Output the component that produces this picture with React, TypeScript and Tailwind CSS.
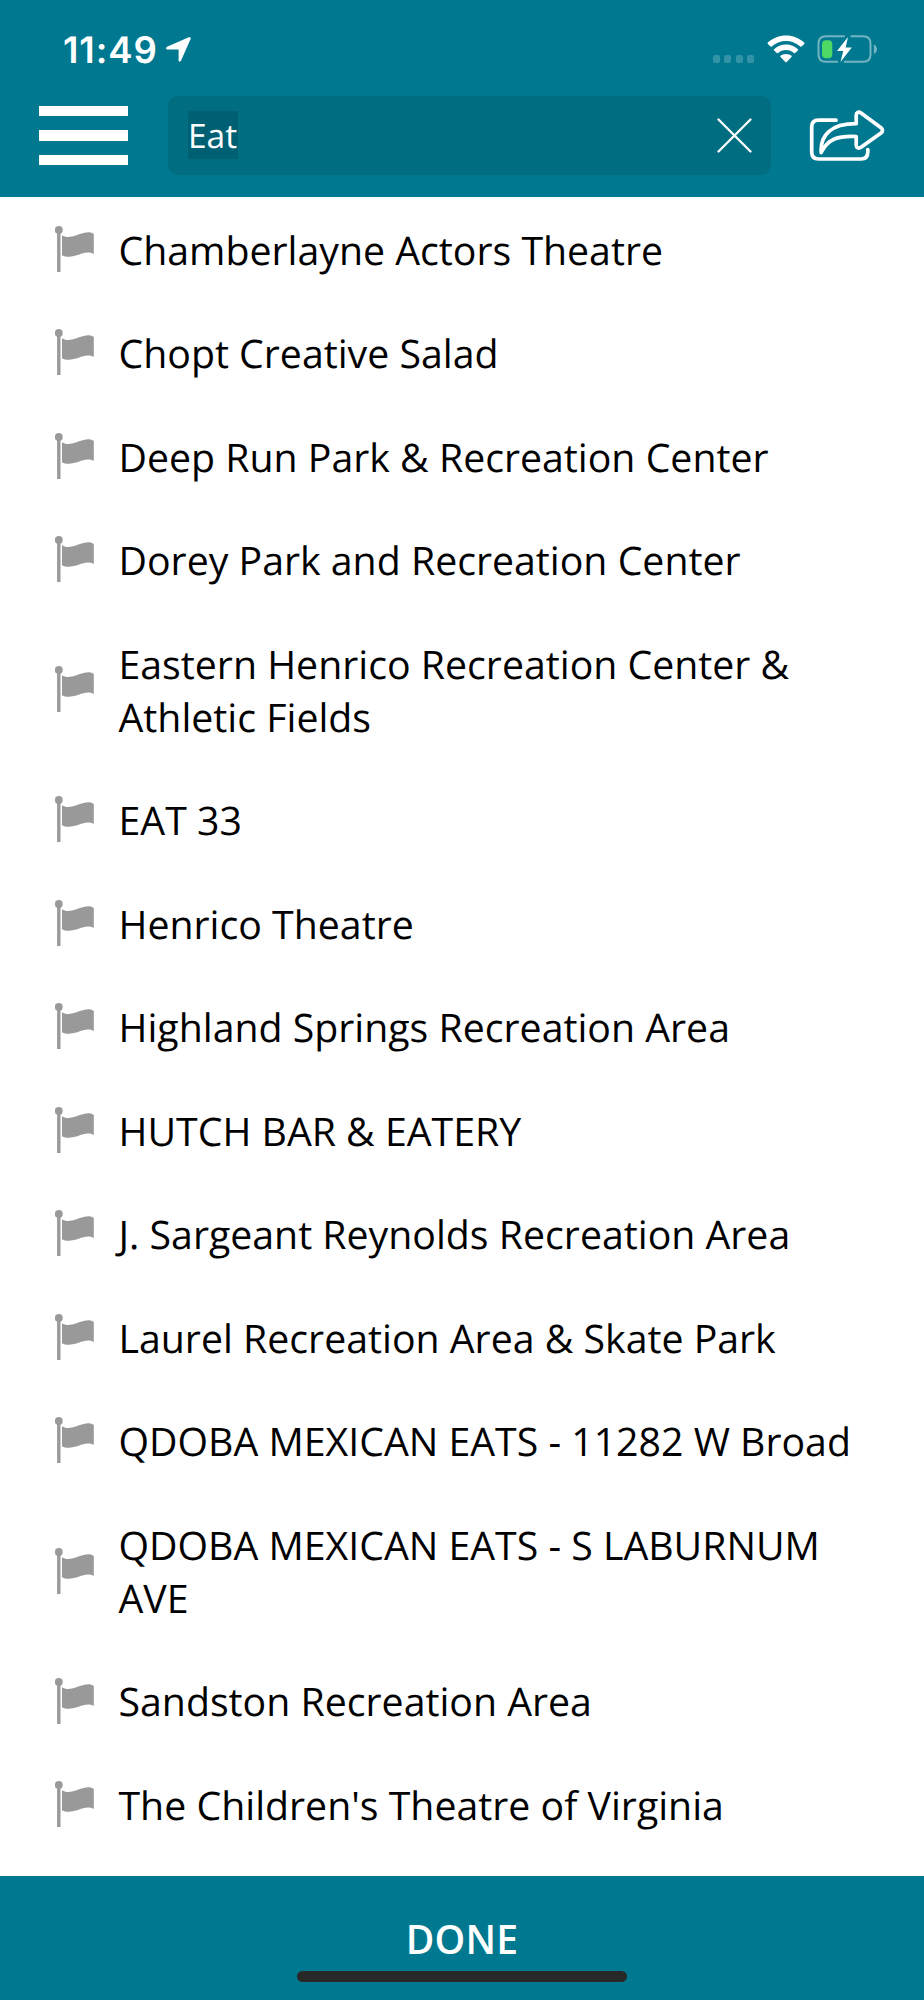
import React, { useState } from "react";

const PLACES = [
  "Chamberlayne Actors Theatre",
  "Chopt Creative Salad",
  "Deep Run Park & Recreation Center",
  "Dorey Park and Recreation Center",
  "Eastern Henrico Recreation Center & Athletic Fields",
  "EAT 33",
  "Henrico Theatre",
  "Highland Springs Recreation Area",
  "HUTCH BAR & EATERY",
  "J. Sargeant Reynolds Recreation Area",
  "Laurel Recreation Area & Skate Park",
  "QDOBA MEXICAN EATS - 11282 W Broad",
  "QDOBA MEXICAN EATS - S LABURNUM AVE",
  "Sandston Recreation Area",
  "The Children's Theatre of Virginia",
];

const FlagIcon = () => (
  <svg className="w-10 h-[46px] shrink-0" viewBox="0 0 40 46" fill="#999999">
    <circle cx="3.8" cy="4" r="3.9" />
    <path d="M2.1 5H5.5V46H2.1z" />
    <path d="M7 9.3C15 14.5 25 6.3 33.5 6.3C35.5 6.3 37.3 6.9 38.8 8V28C30.5 23.5 23 30.8 13.5 30.8C11 30.8 9 30.2 7 29.2z" />
  </svg>
);

const LocationIcon = () => (
  <svg className="w-[25px] h-[25px]" viewBox="0 0 25 25" fill="white">
    <path d="M1 9.7L22.8.3C24.2-.2 25 .6 24.6 2L15 23.8C14.5 25 12.6 24.9 12.6 23.4V12.5H1.5C-.2 12.5-.4 10.4 1 9.7z" />
  </svg>
);

const WifiIcon = () => (
  <svg className="w-[38px] h-7" viewBox="0 0 38 28" fill="white">
    <path d="M19 .4C26 .4 32.5 3.1 37.2 7.6C37.6 8 37.6 8.5 37.2 8.9L34.5 11.5C34.1 11.9 33.6 11.9 33.2 11.5C29.4 8 24.4 6 19 6S8.6 8 4.8 11.5C4.4 11.9 3.9 11.9 3.5 11.5L.8 8.9C.4 8.5.4 8 .8 7.6C5.5 3.1 12 .4 19 .4z" />
    <path d="M19 9.6C23.6 9.6 27.8 11.3 30.9 14.2C31.3 14.6 31.3 15 30.9 15.4L28.1 18.1C27.7 18.5 27.3 18.4 26.9 18.1C24.8 16.2 22 15.1 19 15.1S13.2 16.2 11.1 18.1C10.7 18.4 10.3 18.5 9.9 18.1L7.1 15.4C6.7 15 6.7 14.6 7.1 14.2C10.2 11.3 14.4 9.6 19 9.6z" />
    <path d="M19 18.9C21.2 18.9 23.1 19.6 24.5 20.8C24.9 21.2 24.9 21.6 24.5 22L19.7 26.9C19.2 27.4 18.8 27.4 18.3 26.9L13.5 22C13.1 21.6 13.1 21.2 13.5 20.8C14.9 19.6 16.8 18.9 19 18.9z" />
  </svg>
);

const BatteryIcon = () => (
  <svg className="w-[61px] h-7" viewBox="0 0 61 28" fill="none">
    <g stroke="white" strokeOpacity="0.45" strokeWidth="2">
      <path d="M27.8 1.2H9C4 1.2 1.5 3.7 1.5 8.5V19.5C1.5 24.3 4 26.8 9 26.8H21" />
      <path d="M33.5 1.2H46C51 1.2 53.5 3.7 53.5 8.5V19.5C53.5 24.3 51 26.8 46 26.8H26.8" />
    </g>
    <path d="M56.8 9.5C61 11 61 17.5 56.8 19z" fill="white" fillOpacity="0.45" />
    <rect x="5" y="5.2" width="10.3" height="18" rx="4" fill="#4cd964" />
    <path d="M31 2L20 16H26.2L23.5 27L34.8 12.5H28.6z" fill="white" />
  </svg>
);

const ShareIcon = () => (
  <svg className="w-[76px] h-[52px]" viewBox="0 0 76 52" fill="none" stroke="white" strokeWidth="3.7" strokeLinecap="round" strokeLinejoin="round">
    <path d="M27 10.2H9.5C5 10.2 2.7 12.5 2.7 17V42C2.7 46.500 5 49 9.5 49H52C56.5 49 58.8 46.5 58.8 42V39.5" />
    <path d="M12.2 42.5C11 25 22 13.7 47.2 13.7V5.5C47.2 2.5 49.5 1.3 52 3L72 17.8C74 19.4 74 21.4 72 23L52 37.3C49.5 39 47.2 37.8 47.2 35V26.5C29 25.5 19 29 12.2 42.5z" />
  </svg>
);

const StatusBar = () => (
  <div className="h-[96px] pt-[35px] pl-[63px] pr-[46px] flex items-start justify-between">
    <div className="flex items-start">
      <span className="w-[103px] h-7 pt-px font-[Inter,sans-serif] font-semibold text-[36.5px] leading-7 tracking-[0.9px] text-white">11:49</span>
      <div className="pt-[2px]"><LocationIcon /></div>
    </div>
    <div className="flex items-start">
      <div className="flex gap-[4.5px] pt-5 mr-[13px]">
        {[0, 1, 2, 3].map((dot) => (
          <div key={dot} className="w-[7px] h-[7.5px] rounded-[2px] bg-white/20" />
        ))}
      </div>
      <WifiIcon />
      <div className="ml-[12px]"><BatteryIcon /></div>
    </div>
  </div>
);

export default function App() {
  const [query, setQuery] = useState("Eat");

  return (
    <div className="w-[924px] h-[2000px] flex flex-col overflow-hidden bg-white font-['Open_Sans',sans-serif] [text-rendering:geometricPrecision]">
      <header className="h-[197px] shrink-0 bg-[#007890]">
        <StatusBar />
        <div className="flex items-center pl-[39px] pr-[38px]">
          <button aria-label="Menu" className="w-[89px] flex flex-col gap-[14px]">
            <span className="h-[10.5px] bg-white" />
            <span className="h-[10.5px] bg-white" />
            <span className="h-[10.5px] bg-white" />
          </button>
          <div className="ml-10 w-[603px] h-[79px] rounded-[10px] bg-[#006d80] flex items-center justify-between pl-[20px] pr-[19px]">
            <span className="h-12 mb-[2px] pr-px bg-[#006073] text-white text-[33.5px] leading-[48px]">{query}</span>
            <button aria-label="Clear" onClick={() => setQuery("")}>
              <svg className="w-[35px] h-[35px]" viewBox="0 0 35 35" stroke="white" strokeWidth="2.3" strokeLinecap="round">
                <path d="M1.5 1.5L33.5 33.5M33.5 1.5L1.5 33.5" />
              </svg>
            </button>
          </div>
          <button aria-label="Share" className="ml-[38px]"><ShareIcon /></button>
        </div>
      </header>

      <ul className="flex-1">
        {PLACES.map((place) => (
          <li key={place} className="flex items-center gap-[23.5px] pl-[55px] pr-[60px] py-[25.1px]">
            <FlagIcon />
            <span className="text-[39.25px] leading-[53.3px] pt-[1.5px] -mb-[1.5px] text-black">{place}</span>
          </li>
        ))}
      </ul>

      <footer className="h-[124px] shrink-0 bg-[#007890] flex flex-col items-center justify-end pb-[18px]">
        <button className="font-semibold text-[39px] leading-[53px] tracking-[0.2px] text-white mb-[6px]">DONE</button>
        <div className="w-[330px] h-[11px] rounded-full bg-[#282828]" />
      </footer>
    </div>
  );
}
